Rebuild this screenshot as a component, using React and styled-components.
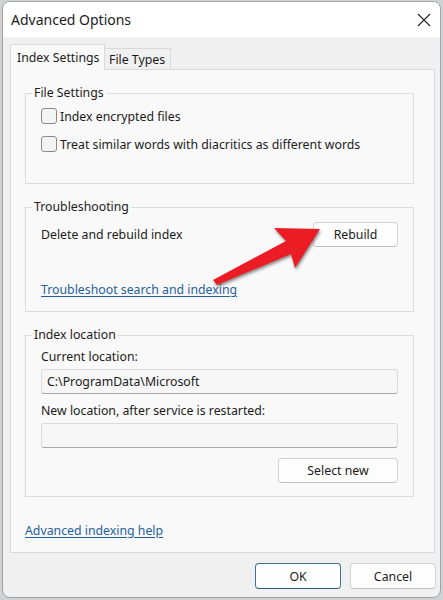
import React from 'react';
import styled, { createGlobalStyle } from 'styled-components';

const Global = createGlobalStyle`
  html, body { margin: 0; padding: 0; }
  body {
    background: #cfd1d2;
    width: 443px;
    height: 600px;
    overflow: hidden;
    font-family: "Noto Sans", "Open Sans", sans-serif;
    color: #1b1b1b;
  }
`;

const Window = styled.div`
  position: relative;
  margin: 1px 0 0 2px;
  width: 439px;
  height: 597px;
  box-sizing: border-box;
  border: 1px solid #a3a3a3;
  border-radius: 8px;
  overflow: hidden;
  display: flex;
  flex-direction: column;
  background: #f0f0f0;
`;

const TitleBar = styled.div`
  height: 35px;
  flex: none;
  background: #ffffff;
  display: flex;
  align-items: center;
  justify-content: space-between;
  padding: 0 9px 0 8px;
`;

const Title = styled.div`
  font-size: 14px;
  line-height: 20px;
  margin-top: 1px;
`;

const CloseIcon = styled.svg`
  width: 14px;
  height: 14px;
  display: block;
`;

const Body = styled.div`
  flex: 1;
  display: flex;
  flex-direction: column;
  padding: 7px 4px 0 7px;
`;

const TabRow = styled.div`
  display: flex;
  align-items: flex-end;
  height: 25px;
  position: relative;
  z-index: 1;
`;

const Tab = styled.div`
  box-sizing: border-box;
  width: ${p => p.$w}px;
  height: ${p => (p.$active ? 26 : 21)}px;
  margin-bottom: ${p => (p.$active ? -1 : 0)}px;
  background: ${p => (p.$active ? '#f9f9f9' : '#f0f0f0')};
  border: 1px solid #d9d9d9;
  border-bottom: none;
  border-left: ${p => (p.$first ? '1px solid #d9d9d9' : 'none')};
  font-size: 12.3px;
  white-space: nowrap;
  display: flex;
  align-items: center;
  padding-left: ${p => (p.$active ? 6 : 4)}px;
  padding-top: ${p => (p.$active ? 0 : 1)}px;
`;

const Panel = styled.div`
  box-sizing: border-box;
  width: 425px;
  background: #f9f9f9;
  border: 1px solid #d9d9d9;
  padding: 14px 20px 12px 14px;
  display: flex;
  flex-direction: column;
  gap: 14px;
`;

const Group = styled.fieldset`
  margin: 0;
  min-width: 0;
  border: 1px solid #dcdcdc;
  padding: ${p => p.$pad};
  padding-left: 15px;
  padding-right: 15px;
  display: flex;
  flex-direction: column;
`;

const Legend = styled.legend`
  font-size: 12.3px;
  line-height: 18px;
  padding: 0 2px;
  margin-left: -9px;
`;

const CheckRow = styled.label`
  display: flex;
  align-items: center;
  height: 22px;
  font-size: 12.3px;
  & + & { margin-top: 6px; }
`;

const Box = styled.span`
  box-sizing: border-box;
  width: 16px;
  height: 16px;
  border: 1px solid #8a8a8a;
  border-radius: 3px;
  background: #f4f4f4;
  margin-right: 3px;
  flex: none;
`;

const SplitRow = styled.div`
  display: flex;
  align-items: center;
  justify-content: space-between;
  height: 25px;
  font-size: 12.3px;
`;

const Button = styled.button`
  box-sizing: border-box;
  width: ${p => p.$w}px;
  height: ${p => p.$h || 25}px;
  background: #fdfdfd;
  border: 1px solid ${p => (p.$primary ? '#3f6f98' : '#d2d2d2')};
  border-bottom-color: ${p => (p.$primary ? '#2c5a82' : '#c2c2c2')};
  border-radius: 4px;
  font-family: inherit;
  font-size: 12.3px;
  color: #1b1b1b;
  padding: 0;
  margin-top: ${p => p.$mt || 0}px;
  align-self: ${p => p.$self || 'auto'};
`;

const Link = styled.a`
  display: block;
  font-size: 12.3px;
  line-height: 18px;
  color: #1f5f9c;
  text-decoration: underline;
  text-underline-offset: 2px;
  margin-top: ${p => p.$mt || 0}px;
  align-self: flex-start;
`;

const Label = styled.div`
  font-size: 12.3px;
  line-height: 18px;
  margin-top: ${p => p.$mt || 0}px;
`;

const Field = styled.div`
  box-sizing: border-box;
  height: 25px;
  margin-top: 3px;
  background: #f6f6f6;
  border: 1px solid #dadada;
  border-bottom-color: #a8a8a8;
  border-radius: 3px;
  font-size: 12.3px;
  display: flex;
  align-items: center;
  padding-left: 5px;
`;

const Footer = styled.div`
  display: flex;
  justify-content: flex-end;
  gap: 9px;
  margin: 10px 0 0 0;
`;

const Arrow = styled.svg`
  position: absolute;
  left: 198px;
  top: 209px;
  width: 130px;
  height: 80px;
  overflow: visible;
  filter: drop-shadow(1px 2px 1.5px rgba(0, 0, 0, 0.45));
`;

export default function App() {
  return (
    <>
      <Global />
      <Window>
        <TitleBar>
          <Title>Advanced Options</Title>
          <CloseIcon viewBox="0 0 14 14">
            <path d="M1 1 L13 13 M13 1 L1 13" stroke="#2b2b2b" strokeWidth="1.2" fill="none" />
          </CloseIcon>
        </TitleBar>
        <Body>
          <TabRow>
            <Tab $active $first $w={95}>Index Settings</Tab>
            <Tab $w={66}>File Types</Tab>
          </TabRow>
          <Panel>
            <Group $pad="3px 15px 28px">
              <Legend>File Settings</Legend>
              <CheckRow><Box />Index encrypted files</CheckRow>
              <CheckRow><Box />Treat similar words with diacritics as different words</CheckRow>
            </Group>
            <Group $pad="6px 15px 12px">
              <Legend>Troubleshooting</Legend>
              <SplitRow>
                <span>Delete and rebuild index</span>
                <Button $w={85}>Rebuild</Button>
              </SplitRow>
              <Link $mt={34}>Troubleshoot search and indexing</Link>
            </Group>
            <Group $pad="4px 15px 13px">
              <Legend>Index location</Legend>
              <Label>Current location:</Label>
              <Field>C:\ProgramData\Microsoft</Field>
              <Label $mt={8}>New location, after service is restarted:</Label>
              <Field />
              <Button $w={120} $mt={10} $self="flex-end">Select new</Button>
            </Group>
            <Link $mt={11}>Advanced indexing help</Link>
          </Panel>
          <Footer>
            <Button $w={86} $h={26} $primary>OK</Button>
            <Button $w={86} $h={26}>Cancel</Button>
          </Footer>
        </Body>
        <Arrow viewBox="0 0 130 80">
          <polygon points="12,69 85,30 73,17 119,18 94,57 90,43 16,74" fill="#ec1c24" />
        </Arrow>
      </Window>
    </>
  );
}
